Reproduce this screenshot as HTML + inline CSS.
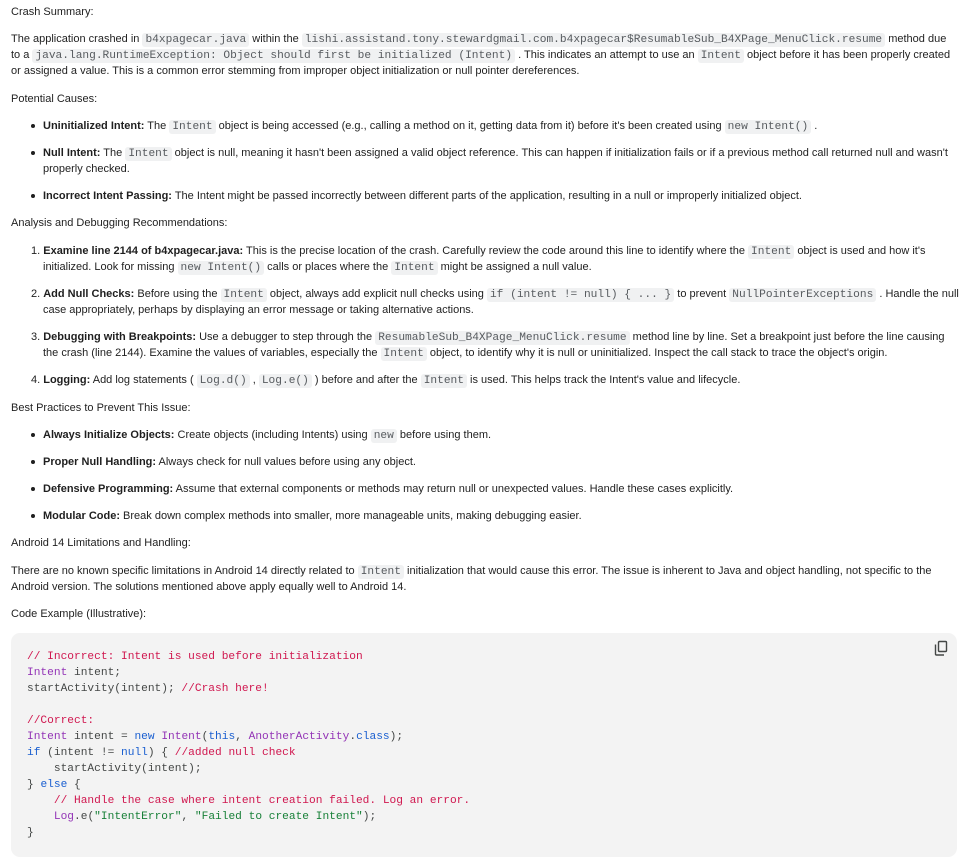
<!DOCTYPE html>
<html><head><meta charset="utf-8"><style>
body{margin:0;width:975px;height:858px;background:#fff;overflow:hidden;font-family:"Liberation Sans",Arial,sans-serif;font-size:11px;color:#1f1f1f;position:relative}
.l{position:absolute;white-space:nowrap;line-height:16px;height:16px}
code{font-family:"Liberation Mono",monospace;font-size:11.2px;color:#575b5f;background:#f0f1f2;padding:1px 3px;border-radius:3px}
b{font-weight:bold}
.dot{position:absolute;left:31px;width:4px;height:4px;border-radius:2px;background:#1f1f1f}
.code{position:absolute;left:11px;top:633px;width:946px;height:224px;background:#f3f3f3;border-radius:9px}
.cl{position:absolute;left:27px;white-space:pre;font-family:"Liberation Mono",monospace;font-size:11.2px;line-height:16px;color:#444746}
.c{color:#d0174f}.k{color:#1a5fd0}.t{color:#9334b6}.s{color:#188038}
</style></head><body>
<div class="l" style="left:11px;top:4px">Crash Summary:</div>
<div class="l" style="left:11px;top:31px">The application crashed in <code>b4xpagecar.java</code> within the <code>lishi.assistand.tony.stewardgmail.com.b4xpagecar$ResumableSub_B4XPage_MenuClick.resume</code> method due</div>
<div class="l" style="left:11px;top:47px">to a <code>java.lang.RuntimeException: Object should first be initialized (Intent)</code> . This indicates an attempt to use an <code>Intent</code> object before it has been properly created</div>
<div class="l" style="left:11px;top:63px">or assigned a value. This is a common error stemming from improper object initialization or null pointer dereferences.</div>
<div class="l" style="left:11px;top:91px">Potential Causes:</div>
<div class="dot" style="top:124px"></div>
<div class="l" style="left:43px;top:118px"><b>Uninitialized Intent:</b> The <code>Intent</code> object is being accessed (e.g., calling a method on it, getting data from it) before it's been created using <code>new Intent()</code> .</div>
<div class="dot" style="top:151px"></div>
<div class="l" style="left:43px;top:145px"><b>Null Intent:</b> The <code>Intent</code> object is null, meaning it hasn't been assigned a valid object reference. This can happen if initialization fails or if a previous method call returned null and wasn't</div>
<div class="l" style="left:43px;top:161px">properly checked.</div>
<div class="dot" style="top:194px"></div>
<div class="l" style="left:43px;top:188px"><b>Incorrect Intent Passing:</b> The Intent might be passed incorrectly between different parts of the application, resulting in a null or improperly initialized object.</div>
<div class="l" style="left:11px;top:215px">Analysis and Debugging Recommendations:</div>
<div class="l" style="left:31px;top:243px">1. <b>Examine line 2144 of b4xpagecar.java:</b> This is the precise location of the crash. Carefully review the code around this line to identify where the <code>Intent</code> object is used and how it's</div>
<div class="l" style="left:43px;top:259px">initialized. Look for missing <code>new Intent()</code> calls or places where the <code>Intent</code> might be assigned a null value.</div>
<div class="l" style="left:31px;top:286px">2. <b>Add Null Checks:</b> Before using the <code>Intent</code> object, always add explicit null checks using <code>if (intent != null) { ... }</code> to prevent <code>NullPointerExceptions</code> . Handle the null</div>
<div class="l" style="left:43px;top:302px">case appropriately, perhaps by displaying an error message or taking alternative actions.</div>
<div class="l" style="left:31px;top:329px">3. <b>Debugging with Breakpoints:</b> Use a debugger to step through the <code>ResumableSub_B4XPage_MenuClick.resume</code> method line by line. Set a breakpoint just before the line causing</div>
<div class="l" style="left:43px;top:345px">the crash (line 2144). Examine the values of variables, especially the <code>Intent</code> object, to identify why it is null or uninitialized. Inspect the call stack to trace the object's origin.</div>
<div class="l" style="left:31px;top:372px">4. <b>Logging:</b> Add log statements ( <code>Log.d()</code> , <code>Log.e()</code> ) before and after the <code>Intent</code> is used. This helps track the Intent's value and lifecycle.</div>
<div class="l" style="left:11px;top:400px">Best Practices to Prevent This Issue:</div>
<div class="dot" style="top:433px"></div>
<div class="l" style="left:43px;top:427px"><b>Always Initialize Objects:</b> Create objects (including Intents) using <code>new</code> before using them.</div>
<div class="dot" style="top:460px"></div>
<div class="l" style="left:43px;top:454px"><b>Proper Null Handling:</b> Always check for null values before using any object.</div>
<div class="dot" style="top:487px"></div>
<div class="l" style="left:43px;top:481px"><b>Defensive Programming:</b> Assume that external components or methods may return null or unexpected values. Handle these cases explicitly.</div>
<div class="dot" style="top:514px"></div>
<div class="l" style="left:43px;top:508px"><b>Modular Code:</b> Break down complex methods into smaller, more manageable units, making debugging easier.</div>
<div class="l" style="left:11px;top:535px">Android 14 Limitations and Handling:</div>
<div class="l" style="left:11px;top:563px">There are no known specific limitations in Android 14 directly related to <code>Intent</code> initialization that would cause this error. The issue is inherent to Java and object handling, not specific to the</div>
<div class="l" style="left:11px;top:579px">Android version. The solutions mentioned above apply equally well to Android 14.</div>
<div class="l" style="left:11px;top:606px">Code Example (Illustrative):</div>
<div class="code"></div>
<svg style="position:absolute;left:933px;top:640px" width="16" height="16" viewBox="0 0 16 16" fill="none" stroke="#444746" stroke-width="1.4"><rect x="5.5" y="1.5" width="8" height="10" rx="1"/><path d="M2.5 4.5v9.5a1 1 0 0 0 1 1h7.5"/></svg>
<div class="cl" style="top:649px"><span class="c">// Incorrect: Intent is used before initialization</span></div>
<div class="cl" style="top:665px"><span class="t">Intent</span> intent;</div>
<div class="cl" style="top:681px">startActivity(intent); <span class="c">//Crash here!</span></div>
<div class="cl" style="top:713px"><span class="c">//Correct:</span></div>
<div class="cl" style="top:729px"><span class="t">Intent</span> intent = <span class="k">new</span> <span class="t">Intent</span>(<span class="k">this</span>, <span class="t">AnotherActivity</span>.<span class="k">class</span>);</div>
<div class="cl" style="top:745px"><span class="k">if</span> (intent != <span class="k">null</span>) { <span class="c">//added null check</span></div>
<div class="cl" style="top:761px">    startActivity(intent);</div>
<div class="cl" style="top:777px">} <span class="k">else</span> {</div>
<div class="cl" style="top:793px">    <span class="c">// Handle the case where intent creation failed. Log an error.</span></div>
<div class="cl" style="top:809px">    <span class="t">Log</span>.e(<span class="s">"IntentError"</span>, <span class="s">"Failed to create Intent"</span>);</div>
<div class="cl" style="top:825px">}</div>
</body></html>
